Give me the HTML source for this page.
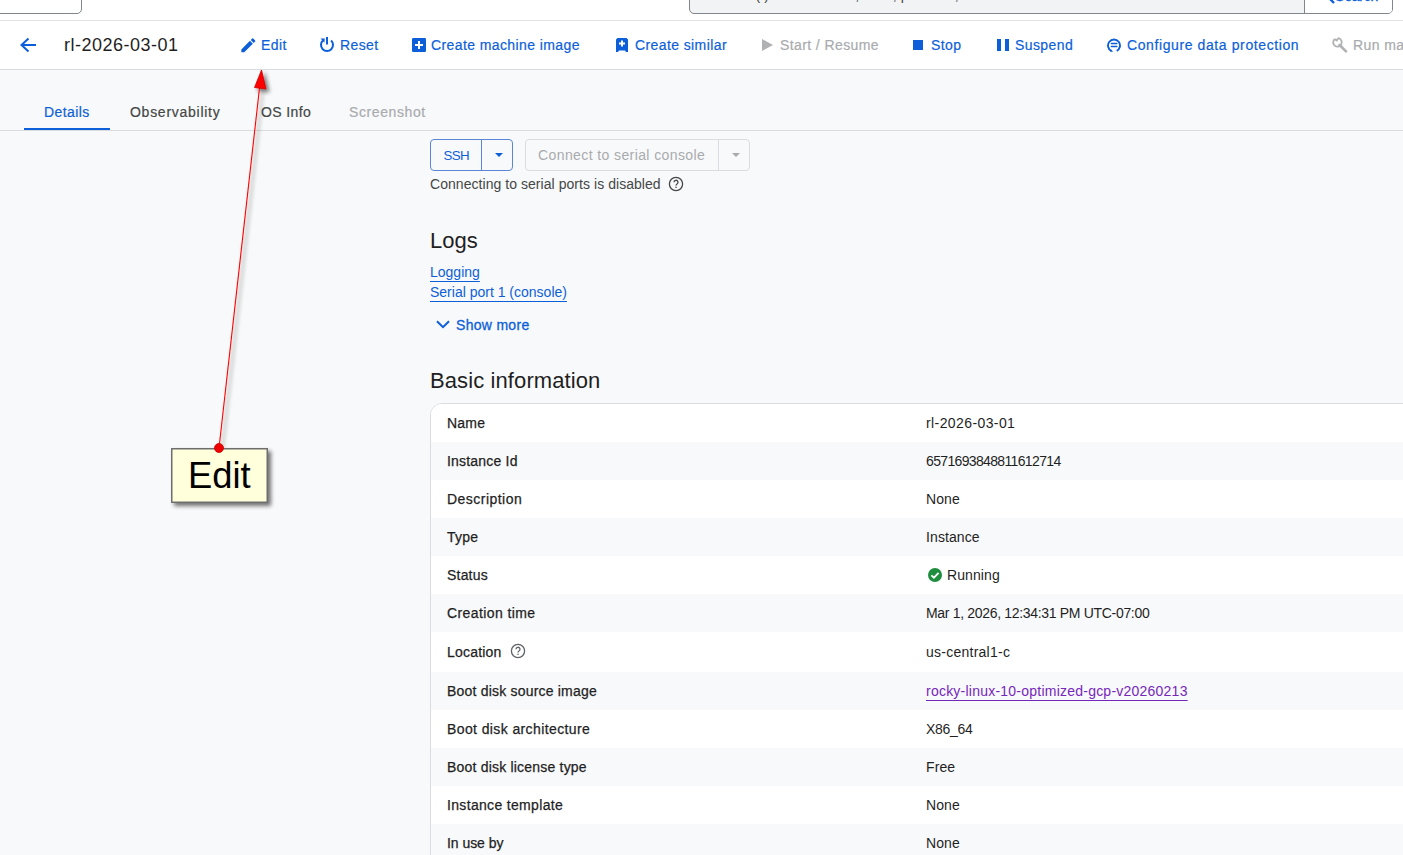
<!DOCTYPE html>
<html><head><meta charset="utf-8">
<style>
*{box-sizing:border-box;margin:0;padding:0}
html,body{width:1403px;height:855px;overflow:hidden;background:#f8f9fa;font-family:"Liberation Sans",sans-serif;color:#1f1f1f}
.abs{position:absolute}
svg{position:absolute;display:block}
#top{position:absolute;left:0;top:0;width:1403px;height:70px;background:#fff}
#topline{position:absolute;left:0;top:20px;width:1403px;height:1px;background:#e3e3e3}
#leftbox{position:absolute;left:-10px;top:-20px;width:92px;height:34px;border:1.5px solid #80868b;border-radius:0 0 5px 5px;background:#fff}
#search{position:absolute;left:689px;top:-20px;width:704px;height:34px;border:1.5px solid #80868b;border-radius:0 0 5px 5px;background:#f1f3f4;overflow:hidden}
#searchbtn{position:absolute;left:614px;top:-2px;width:90px;height:36px;border-left:1.5px solid #80868b;background:#fff;overflow:hidden}
#actline{position:absolute;left:0;top:69px;width:1403px;height:1px;background:#dadce0}
.t14{font-size:14px;line-height:16px;white-space:nowrap}
.act{position:absolute;top:37px;font-size:14px;line-height:16px;white-space:nowrap;color:#0d5fd9;letter-spacing:0.4px;-webkit-text-stroke:0.2px currentColor}
.dis{color:#a8abae}
.tab{position:absolute;top:104px;font-size:14px;line-height:16px;color:#444746;white-space:nowrap;letter-spacing:0.4px;-webkit-text-stroke:0.2px currentColor}
.row{position:absolute;left:0;width:998px;height:38px}
.row .k{position:absolute;left:16px;top:11px;font-size:14px;line-height:16px;color:#1f1f1f;white-space:nowrap;-webkit-text-stroke:0.25px #1f1f1f;letter-spacing:0.2px}
.row .v{position:absolute;left:495px;top:11px;font-size:14px;line-height:16px;color:#1f1f1f;white-space:nowrap;letter-spacing:0.1px}
.row .v .chk{left:2px;top:1px}
.row .v span{display:inline-block}
.g{background:#f8f9fa}
.w{background:#fff}
a{color:#0d5fd9;text-decoration:underline;text-decoration-skip-ink:none;text-underline-offset:4px}
a.vl{color:#7627bb}
.help{position:absolute}
</style></head><body>
<div id="top"></div>
<div id="leftbox"></div>
<div id="search">
  <div class="abs" style="left:65.5px;top:5.5px;font-size:14px;line-height:16px;color:#444746;white-space:nowrap;letter-spacing:0.05px">(/) for resources, docs, products, and more</div>
  <div id="searchbtn">
    <svg style="left:9px;top:4px" width="24" height="24" viewBox="0 0 24 24"><circle cx="10" cy="10" r="6" stroke="#0d5fd9" stroke-width="2" fill="none"/><path d="M14.5 14.5L20 20" stroke="#0d5fd9" stroke-width="2.4"/></svg>
    <div class="abs" style="left:30px;top:8.5px;font-size:14px;line-height:16px;color:#0d5fd9;-webkit-text-stroke:0.3px #0d5fd9;letter-spacing:-0.2px">Search</div>
  </div>
</div>
<div id="topline"></div>
<div id="actline"></div>

<!-- back arrow -->
<svg style="left:18px;top:35px" width="20" height="20" viewBox="0 0 20 20"><path d="M18 10H4.5M10.5 3.5L3.5 10L10.5 16.5" stroke="#0d5fd9" stroke-width="2" fill="none"/></svg>
<div class="abs" style="left:64px;top:35px;font-size:18px;line-height:20px;color:#1f1f1f;letter-spacing:0.5px">rl-2026-03-01</div>

<!-- edit pencil -->
<svg style="left:238.7px;top:35.7px" width="18.67" height="18.67" viewBox="0 0 24 24"><path fill="#0d5fd9" d="M3 17.25V21h3.75L17.81 9.94l-3.75-3.75L3 17.25zM20.71 7.04a1 1 0 0 0 0-1.41l-2.34-2.34a1 1 0 0 0-1.41 0l-1.83 1.83 3.75 3.75 1.83-1.83z"/></svg>
<div class="act" style="left:261px">Edit</div>
<!-- reset -->
<svg style="left:319px;top:36px" width="16" height="16" viewBox="0 0 16 16"><path d="M3.9 4.6A6 6 0 1 0 12.1 4.6" stroke="#0d5fd9" stroke-width="2" fill="none"/><path d="M8 1v7.5" stroke="#0d5fd9" stroke-width="2"/><path d="M1.6 2.6L5.8 2.6L5.4 6.8Z" fill="#0d5fd9"/></svg>
<div class="act" style="left:340px">Reset</div>
<!-- create machine image -->
<svg style="left:412px;top:38px" width="14" height="14" viewBox="0 0 14 14"><rect x="0" y="0" width="14" height="14" rx="1.2" fill="#0d5fd9"/><path d="M7 3v8M3 7h8" stroke="#fff" stroke-width="2"/></svg>
<div class="act" style="left:431px">Create machine image</div>
<!-- create similar -->
<svg style="left:616px;top:38px" width="12" height="14" viewBox="0 0 12 14"><path d="M1.5 0H10.5L12 1.5V14H10L9 12.5H3L2 14H0V1.5Z" fill="#0d5fd9"/><path d="M6 2.5v6M3 5.5h6" stroke="#fff" stroke-width="2"/></svg>
<div class="act" style="left:635px">Create similar</div>
<!-- play -->
<svg style="left:762px;top:39px" width="11" height="12" viewBox="0 0 11 12"><path d="M0 0L11 6L0 12Z" fill="#b0b1b3"/></svg>
<div class="act dis" style="left:780px">Start / Resume</div>
<!-- stop -->
<svg style="left:913px;top:40px" width="10" height="10" viewBox="0 0 10 10"><rect width="10" height="10" fill="#0d5fd9"/></svg>
<div class="act" style="left:931px">Stop</div>
<!-- pause -->
<svg style="left:997px;top:39px" width="12" height="12" viewBox="0 0 12 12"><rect x="0" width="4" height="12" fill="#0d5fd9"/><rect x="8" width="4" height="12" fill="#0d5fd9"/></svg>
<div class="act" style="left:1015px">Suspend</div>
<!-- data protection -->
<svg style="left:1107px;top:38px" width="14" height="14" viewBox="0 0 14 14"><path d="M4.3 12.9A6 6 0 1 1 9.7 12.9" stroke="#0d5fd9" stroke-width="1.9" fill="none"/><path d="M4 11.6L6.2 13.8H3.2Z" fill="#0d5fd9"/><path d="M4.3 5.5h5.6M4.3 8.5h5.6" stroke="#0d5fd9" stroke-width="1.3" stroke-linecap="round"/></svg>
<div class="act" style="left:1127px;letter-spacing:0.6px">Configure data protection</div>
<!-- wrench -->
<svg style="left:1331px;top:36px" width="18" height="18" viewBox="0 0 18 18"><path d="M3.2 3.6A4.3 4.3 0 1 0 7.4 2.2L5.6 4.6L4.4 3.3Z" stroke="#b0b1b3" stroke-width="1.8" fill="none" stroke-linejoin="round"/><path d="M8.6 9L15 15.4" stroke="#b0b1b3" stroke-width="2.6" stroke-linecap="round"/></svg>
<div class="act dis" style="left:1353px">Run machine</div>

<!-- tabs -->
<div class="tab" style="left:44px;color:#0d5fd9">Details</div>
<div class="tab" style="left:130px;letter-spacing:0.73px">Observability</div>
<div class="tab" style="left:261px">OS Info</div>
<div class="tab" style="left:349px;color:#a8abae;letter-spacing:0.6px">Screenshot</div>
<div class="abs" style="left:0;top:130px;width:1403px;height:1px;background:#dadce0"></div>
<div class="abs" style="left:24px;top:128px;width:86px;height:2px;background:#0d5fd9"></div>

<!-- SSH -->
<div class="abs" style="left:430px;top:139px;width:83px;height:32px;border:1px solid #5b86d6;border-radius:4px"></div>
<div class="abs" style="left:481px;top:139px;width:1px;height:32px;background:#5b86d6"></div>
<div class="abs" style="left:443.5px;top:148px;font-size:13.3px;line-height:16px;white-space:nowrap;color:#0d5fd9;letter-spacing:-0.6px">SSH</div>
<svg style="left:495px;top:153px" width="8" height="4" viewBox="0 0 8 4"><path d="M0 0H8L4 4Z" fill="#0d5fd9"/></svg>
<!-- connect serial -->
<div class="abs" style="left:525px;top:139px;width:225px;height:32px;border:1px solid #dadce0;border-radius:4px"></div>
<div class="abs" style="left:718px;top:139px;width:1px;height:32px;background:#dadce0"></div>
<div class="abs t14" style="left:538px;top:147px;color:#a8abae;letter-spacing:0.4px">Connect to serial console</div>
<svg style="left:732px;top:153px" width="8" height="4" viewBox="0 0 8 4"><path d="M0 0H8L4 4Z" fill="#a8abae"/></svg>

<div class="abs t14" style="left:430px;top:176px;color:#444746;letter-spacing:0.05px">Connecting to serial ports is disabled</div>
<svg style="left:668px;top:176px" width="16" height="16" viewBox="0 0 16 16"><circle cx="8" cy="8" r="6.6" stroke="#444746" stroke-width="1.3" fill="none"/><path d="M6 6.3a2 2 0 1 1 3 1.7c-.7.4-1 .8-1 1.6" stroke="#444746" stroke-width="1.3" fill="none"/><circle cx="8" cy="11.3" r=".8" fill="#444746"/></svg>

<div class="abs" style="left:430px;top:228px;font-size:22px;line-height:26px;color:#1f1f1f">Logs</div>
<div class="abs t14" style="left:430px;top:264px"><a href="#">Logging</a></div>
<div class="abs t14" style="left:430px;top:284px"><a href="#">Serial port 1 (console)</a></div>
<svg style="left:436px;top:320px" width="14" height="9" viewBox="0 0 14 9"><path d="M1 1.2L7 7.2L13 1.2" stroke="#0d5fd9" stroke-width="2" fill="none"/></svg>
<div class="abs t14" style="left:456px;top:317px;color:#0d5fd9;letter-spacing:0.3px;-webkit-text-stroke:0.3px #0d5fd9">Show more</div>
<div class="abs" style="left:430px;top:368px;font-size:22px;line-height:26px;color:#1f1f1f;letter-spacing:0.1px">Basic information</div>

<div class="abs" style="left:430px;top:403px;width:1000px;height:470px;border:1px solid #dadce0;border-radius:12px;background:#fff;overflow:hidden">
<div class="row w" style="top:0px;height:38px"><div class="k" style="top:11px">Name</div><div class="v" style="top:11px"><span style="letter-spacing:0.4px">rl-2026-03-01</span></div></div>
<div class="row g" style="top:38px;height:38px"><div class="k" style="top:11px">Instance Id</div><div class="v" style="top:11px"><span style="letter-spacing:-0.65px">6571693848811612714</span></div></div>
<div class="row w" style="top:76px;height:38px"><div class="k" style="top:11px"><span style="letter-spacing:0.47px">Description</span></div><div class="v" style="top:11px">None</div></div>
<div class="row g" style="top:114px;height:38px"><div class="k" style="top:11px">Type</div><div class="v" style="top:11px">Instance</div></div>
<div class="row w" style="top:152px;height:38px"><div class="k" style="top:11px">Status</div><div class="v" style="top:11px"><svg class="chk" width="14" height="14" viewBox="0 0 14 14"><circle cx="7" cy="7" r="7" fill="#1e8e3e"/><path d="M3.4 7.3L5.9 9.7L10.6 4.9" stroke="#fff" stroke-width="1.8" fill="none"/></svg><span style="margin-left:21px">Running</span></div></div>
<div class="row g" style="top:190px;height:38px"><div class="k" style="top:11px"><span style="letter-spacing:0.4px">Creation time</span></div><div class="v" style="top:11px"><span style="letter-spacing:-0.32px">Mar 1, 2026, 12:34:31 PM UTC-07:00</span></div></div>
<div class="row w" style="top:228px;height:40px"><div class="k" style="top:12px">Location<svg class="help" style="left:63px;top:-1px" width="16" height="16" viewBox="0 0 16 16"><circle cx="8" cy="8" r="6.6" stroke="#5f6368" stroke-width="1.3" fill="none"/><path d="M6 6.3a2 2 0 1 1 3 1.7c-.7.4-1 .8-1 1.6" stroke="#5f6368" stroke-width="1.3" fill="none"/><circle cx="8" cy="11.3" r=".8" fill="#5f6368"/></svg></div><div class="v" style="top:12px"><span style="letter-spacing:0.25px">us-central1-c</span></div></div>
<div class="row g" style="top:268px;height:38px"><div class="k" style="top:11px">Boot disk source image</div><div class="v" style="top:11px"><a class="vl" href="#" style="letter-spacing:0.23px">rocky-linux-10-optimized-gcp-v20260213</a></div></div>
<div class="row w" style="top:306px;height:38px"><div class="k" style="top:11px"><span style="letter-spacing:0.39px">Boot disk architecture</span></div><div class="v" style="top:11px"><span style="letter-spacing:-0.3px">X86_64</span></div></div>
<div class="row g" style="top:344px;height:38px"><div class="k" style="top:11px">Boot disk license type</div><div class="v" style="top:11px">Free</div></div>
<div class="row w" style="top:382px;height:38px"><div class="k" style="top:11px"><span style="letter-spacing:0.33px">Instance template</span></div><div class="v" style="top:11px">None</div></div>
<div class="row g" style="top:420px;height:38px"><div class="k" style="top:11px"><span style="letter-spacing:-0.05px">In use by</span></div><div class="v" style="top:11px">None</div></div>
</div>

<!-- annotation -->
<svg style="left:0;top:0" width="1403" height="855" viewBox="0 0 1403 855">
  <defs>
    <filter id="sh" x="-50%" y="-50%" width="200%" height="200%"><feGaussianBlur in="SourceAlpha" stdDeviation="2"/><feOffset dx="3" dy="3"/><feComponentTransfer><feFuncA type="linear" slope="0.55"/></feComponentTransfer><feMerge><feMergeNode/><feMergeNode in="SourceGraphic"/></feMerge></filter>
  </defs>
  <g filter="url(#sh)">
    <line x1="219" y1="448" x2="259.5" y2="88" stroke="#ff0000" stroke-width="1.1"/>
    <path d="M261.5 70L254.5 87.5L266 89Z" fill="#ff0000" stroke="#cc0000" stroke-width="0.8"/>
  </g>
  <g filter="url(#sh)">
    <rect x="171.75" y="448.75" width="95.5" height="53.5" fill="#ffffdc" stroke="#6e6e6e" stroke-width="1.5"/>
  </g>
  <text x="188" y="488" font-family="Liberation Sans" font-size="36.4" fill="#000">Edit</text>
  <circle cx="219" cy="448" r="4.5" fill="#ee0000" stroke="#cc0000" stroke-width="0.8"/>
</svg>
</body></html>
